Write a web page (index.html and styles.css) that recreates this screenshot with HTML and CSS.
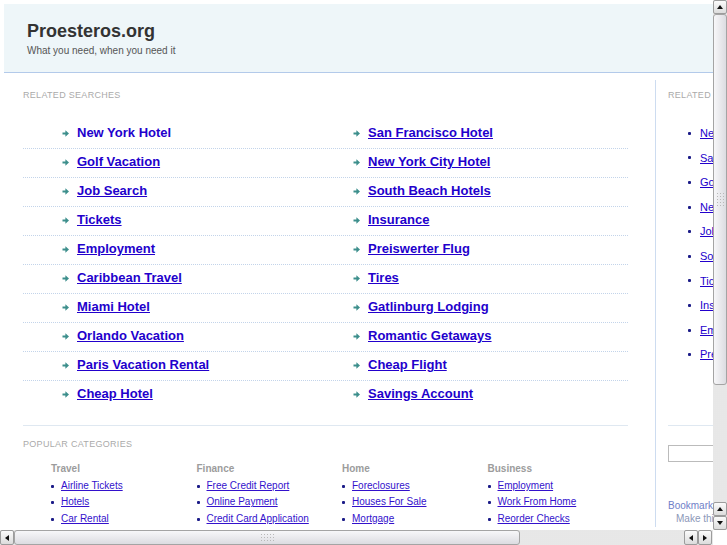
FILE: index.html
```html
<!DOCTYPE html>
<html>
<head>
<meta charset="utf-8">
<title>Proesteros.org</title>
<link rel="stylesheet" href="styles.css">
</head>
<body>
<div class="frame">
  <div class="viewport">
    <div class="page">
      <div class="header">
        <h1 class="title">Proesteros.org</h1>
        <div class="tagline">What you need, when you need it</div>
      </div>
      <div class="content">
        <div class="main">
          <div class="label">Related Searches</div>
          <div class="links">
            <div class="row">
              <div class="item"><svg class="arrow" viewBox="0 0 7 7"><rect x="0.5" y="2.5" width="3.5" height="2"/><path d="M3.4 0.3L7 3.5L3.4 6.7Z"/></svg><a href="#" class="plain">New York Hotel</a></div>
              <div class="item"><svg class="arrow" viewBox="0 0 7 7"><rect x="0.5" y="2.5" width="3.5" height="2"/><path d="M3.4 0.3L7 3.5L3.4 6.7Z"/></svg><a href="#">San Francisco Hotel</a></div>
            </div>
            <div class="row">
              <div class="item"><svg class="arrow" viewBox="0 0 7 7"><rect x="0.5" y="2.5" width="3.5" height="2"/><path d="M3.4 0.3L7 3.5L3.4 6.7Z"/></svg><a href="#">Golf Vacation</a></div>
              <div class="item"><svg class="arrow" viewBox="0 0 7 7"><rect x="0.5" y="2.5" width="3.5" height="2"/><path d="M3.4 0.3L7 3.5L3.4 6.7Z"/></svg><a href="#">New York City Hotel</a></div>
            </div>
            <div class="row">
              <div class="item"><svg class="arrow" viewBox="0 0 7 7"><rect x="0.5" y="2.5" width="3.5" height="2"/><path d="M3.4 0.3L7 3.5L3.4 6.7Z"/></svg><a href="#">Job Search</a></div>
              <div class="item"><svg class="arrow" viewBox="0 0 7 7"><rect x="0.5" y="2.5" width="3.5" height="2"/><path d="M3.4 0.3L7 3.5L3.4 6.7Z"/></svg><a href="#">South Beach Hotels</a></div>
            </div>
            <div class="row">
              <div class="item"><svg class="arrow" viewBox="0 0 7 7"><rect x="0.5" y="2.5" width="3.5" height="2"/><path d="M3.4 0.3L7 3.5L3.4 6.7Z"/></svg><a href="#">Tickets</a></div>
              <div class="item"><svg class="arrow" viewBox="0 0 7 7"><rect x="0.5" y="2.5" width="3.5" height="2"/><path d="M3.4 0.3L7 3.5L3.4 6.7Z"/></svg><a href="#">Insurance</a></div>
            </div>
            <div class="row">
              <div class="item"><svg class="arrow" viewBox="0 0 7 7"><rect x="0.5" y="2.5" width="3.5" height="2"/><path d="M3.4 0.3L7 3.5L3.4 6.7Z"/></svg><a href="#">Employment</a></div>
              <div class="item"><svg class="arrow" viewBox="0 0 7 7"><rect x="0.5" y="2.5" width="3.5" height="2"/><path d="M3.4 0.3L7 3.5L3.4 6.7Z"/></svg><a href="#">Preiswerter Flug</a></div>
            </div>
            <div class="row">
              <div class="item"><svg class="arrow" viewBox="0 0 7 7"><rect x="0.5" y="2.5" width="3.5" height="2"/><path d="M3.4 0.3L7 3.5L3.4 6.7Z"/></svg><a href="#">Caribbean Travel</a></div>
              <div class="item"><svg class="arrow" viewBox="0 0 7 7"><rect x="0.5" y="2.5" width="3.5" height="2"/><path d="M3.4 0.3L7 3.5L3.4 6.7Z"/></svg><a href="#">Tires</a></div>
            </div>
            <div class="row">
              <div class="item"><svg class="arrow" viewBox="0 0 7 7"><rect x="0.5" y="2.5" width="3.5" height="2"/><path d="M3.4 0.3L7 3.5L3.4 6.7Z"/></svg><a href="#">Miami Hotel</a></div>
              <div class="item"><svg class="arrow" viewBox="0 0 7 7"><rect x="0.5" y="2.5" width="3.5" height="2"/><path d="M3.4 0.3L7 3.5L3.4 6.7Z"/></svg><a href="#">Gatlinburg Lodging</a></div>
            </div>
            <div class="row">
              <div class="item"><svg class="arrow" viewBox="0 0 7 7"><rect x="0.5" y="2.5" width="3.5" height="2"/><path d="M3.4 0.3L7 3.5L3.4 6.7Z"/></svg><a href="#">Orlando Vacation</a></div>
              <div class="item"><svg class="arrow" viewBox="0 0 7 7"><rect x="0.5" y="2.5" width="3.5" height="2"/><path d="M3.4 0.3L7 3.5L3.4 6.7Z"/></svg><a href="#">Romantic Getaways</a></div>
            </div>
            <div class="row">
              <div class="item"><svg class="arrow" viewBox="0 0 7 7"><rect x="0.5" y="2.5" width="3.5" height="2"/><path d="M3.4 0.3L7 3.5L3.4 6.7Z"/></svg><a href="#">Paris Vacation Rental</a></div>
              <div class="item"><svg class="arrow" viewBox="0 0 7 7"><rect x="0.5" y="2.5" width="3.5" height="2"/><path d="M3.4 0.3L7 3.5L3.4 6.7Z"/></svg><a href="#">Cheap Flight</a></div>
            </div>
            <div class="row">
              <div class="item"><svg class="arrow" viewBox="0 0 7 7"><rect x="0.5" y="2.5" width="3.5" height="2"/><path d="M3.4 0.3L7 3.5L3.4 6.7Z"/></svg><a href="#">Cheap Hotel</a></div>
              <div class="item"><svg class="arrow" viewBox="0 0 7 7"><rect x="0.5" y="2.5" width="3.5" height="2"/><path d="M3.4 0.3L7 3.5L3.4 6.7Z"/></svg><a href="#">Savings Account</a></div>
            </div>
          </div>
          <div class="popular">
            <div class="label">Popular Categories</div>
            <div class="cats">
              <div class="cat">
                <h3>Travel</h3>
                <ul>
                  <li><span class="dot"></span><a href="#">Airline Tickets</a></li>
                  <li><span class="dot"></span><a href="#">Hotels</a></li>
                  <li><span class="dot"></span><a href="#">Car Rental</a></li>
                </ul>
              </div>
              <div class="cat">
                <h3>Finance</h3>
                <ul>
                  <li><span class="dot"></span><a href="#">Free Credit Report</a></li>
                  <li><span class="dot"></span><a href="#">Online Payment</a></li>
                  <li><span class="dot"></span><a href="#">Credit Card Application</a></li>
                </ul>
              </div>
              <div class="cat">
                <h3>Home</h3>
                <ul>
                  <li><span class="dot"></span><a href="#">Foreclosures</a></li>
                  <li><span class="dot"></span><a href="#">Houses For Sale</a></li>
                  <li><span class="dot"></span><a href="#">Mortgage</a></li>
                </ul>
              </div>
              <div class="cat">
                <h3>Business</h3>
                <ul>
                  <li><span class="dot"></span><a href="#">Employment</a></li>
                  <li><span class="dot"></span><a href="#">Work From Home</a></li>
                  <li><span class="dot"></span><a href="#">Reorder Checks</a></li>
                </ul>
              </div>
            </div>
          </div>
        </div>
        <div class="side">
          <div class="label">Related Searches</div>
          <ul class="side-list">
            <li><span class="dot"></span><a href="#">New York Hotel</a></li>
            <li><span class="dot"></span><a href="#">San Francisco Hotel</a></li>
            <li><span class="dot"></span><a href="#">Golf Vacation</a></li>
            <li><span class="dot"></span><a href="#">New York City Hotel</a></li>
            <li><span class="dot"></span><a href="#">Job Search</a></li>
            <li><span class="dot"></span><a href="#">South Beach Hotels</a></li>
            <li><span class="dot"></span><a href="#">Tickets</a></li>
            <li><span class="dot"></span><a href="#">Insurance</a></li>
            <li><span class="dot"></span><a href="#">Employment</a></li>
            <li><span class="dot"></span><a href="#">Preiswerter Flug</a></li>
          </ul>
          <div class="side-sep"></div>
          <div class="search"><input type="text" class="search-input"></div>
          <div class="bookmark">Bookmark this page</div>
          <div class="homepage">Make this your homepage</div>
        </div>
      </div>
    </div>
  </div>
  <div class="vscroll">
    <div class="sbtn"><span class="tri up"></span></div>
    <div class="vthumb"><span class="grip vgrip"></span></div>
    <div class="track"></div>
    <div class="sbtn"><span class="tri up"></span></div>
    <div class="sbtn"><span class="tri down"></span></div>
  </div>
  <div class="hscroll">
    <div class="sbtn"><span class="tri left"></span></div>
    <div class="hthumb"><span class="grip hgrip"></span></div>
    <div class="track"></div>
    <div class="sbtn"><span class="tri left"></span></div>
    <div class="sbtn"><span class="tri right"></span></div>
  </div>
  <div class="corner"></div>
</div>
</body>
</html>
```
FILE: styles.css
```css
html, body {
  margin: 0;
  padding: 0;
  overflow: hidden;
  background: #fff;
}
body {
  font-family: "Liberation Sans", Arial, Helvetica, sans-serif;
}
.frame {
  display: grid;
  grid-template-columns: 713px 14px;
  grid-template-rows: 530px 15px;
  width: 727px;
  height: 545px;
}
.viewport {
  overflow: hidden;
  background: #fff;
}
.page {
  width: 980px;
  padding: 4px 0 0 4px;
}
.header {
  box-sizing: border-box;
  height: 69px;
  background: #eef6f9;
  border-bottom: 1px solid #b3caea;
  padding: 17px 0 0 23px;
}
.title {
  margin: 0;
  font-size: 18px;
  line-height: 20px;
  font-weight: bold;
  color: #333;
}
.tagline {
  margin-top: 4px;
  font-size: 10px;
  line-height: 12px;
  color: #555;
}
.content {
  display: flex;
  margin-top: 7px;
}
.main {
  width: 605px;
  margin-left: 19px;
  padding-top: 10px;
}
.label {
  font-size: 9px;
  line-height: 11px;
  color: #aaa;
  letter-spacing: 0.3px;
  text-transform: uppercase;
}
.links {
  margin-top: 19px;
}
.row {
  display: grid;
  grid-template-columns: 291px 1fr;
  padding: 4px 0 6px 39px;
  line-height: 18px;
  border-bottom: 1px dotted #c3d4ea;
}
.row:last-child {
  border-bottom: none;
}
.item {
  display: flex;
  align-items: center;
  gap: 8px;
}
.arrow {
  width: 7px;
  height: 7px;
  fill: #3d8f8c;
  flex: none;
}
.item a {
  font-size: 13px;
  font-weight: bold;
  color: #2200cc;
}
.item a.plain {
  text-decoration: none;
}
.popular {
  margin-top: 16px;
  border-top: 1px solid #dfe8f1;
  padding-top: 13px;
}
.cats {
  display: grid;
  grid-template-columns: repeat(4, 145.5px);
  padding-left: 28px;
  margin-top: 11px;
}
.cat h3 {
  margin: 0;
  font-size: 10px;
  line-height: 16px;
  font-weight: bold;
  color: #9c9c9c;
}
.cat ul, .side-list {
  list-style: none;
  margin: 0;
  padding: 0;
}
.cat ul {
  margin-top: 1px;
}
.cat li {
  display: flex;
  align-items: center;
  line-height: 16.4px;
  font-size: 10px;
}
.dot {
  width: 3px;
  height: 3px;
  border-radius: 1px;
  background: #1c1c88;
  margin-right: 7px;
  flex: none;
}
.cat a {
  color: #3311cc;
}
.side {
  width: 300px;
  margin-left: 27px;
  border-left: 1px solid #cddcf0;
  padding: 10px 0 0 12px;
}
.side-list {
  margin-top: 20px;
}
.side-list li {
  display: flex;
  align-items: center;
  padding-left: 20px;
  line-height: 24.6px;
  font-size: 11px;
}
.side-list .dot {
  margin-right: 9px;
}
.side-list a {
  color: #2200cc;
}
.side-sep {
  margin-top: 58px;
  border-top: 1px solid #dfe8f1;
}
.search {
  margin-top: 19px;
}
.search-input {
  box-sizing: border-box;
  width: 150px;
  height: 17px;
  border: 1px solid #bbb;
  padding: 0;
  margin: 0;
  display: block;
}
.bookmark {
  margin-top: 37px;
  font-size: 10px;
  line-height: 13px;
  color: #7080c8;
}
.homepage {
  margin-left: 8px;
  font-size: 10px;
  line-height: 13px;
  color: #8c98b8;
}
.vscroll {
  grid-column: 2;
  grid-row: 1;
  display: flex;
  flex-direction: column;
  background-color: #f2f2f2;
  background-image: radial-gradient(circle, #dadada 0.6px, transparent 0.8px);
  background-size: 2px 2px;
}
.hscroll {
  grid-column: 1;
  grid-row: 2;
  display: flex;
  padding-right: 1px;
  background-color: #f2f2f2;
  background-image: radial-gradient(circle, #dadada 0.6px, transparent 0.8px);
  background-size: 2px 2px;
}
.corner {
  grid-column: 2;
  grid-row: 2;
  background: #fff;
}
.track {
  flex: 1;
}
.sbtn {
  box-sizing: border-box;
  width: 14px;
  height: 14px;
  flex: none;
  border: 1px solid #9c9c9c;
  border-radius: 2px;
  background: linear-gradient(#fbfbfb, #dcdcdc);
  display: flex;
  align-items: center;
  justify-content: center;
}
.hscroll .sbtn {
  height: 15px;
}
.tri {
  width: 0;
  height: 0;
}
.tri.up {
  border-left: 3px solid transparent;
  border-right: 3px solid transparent;
  border-bottom: 4px solid #111;
}
.tri.down {
  border-left: 3px solid transparent;
  border-right: 3px solid transparent;
  border-top: 4px solid #111;
}
.tri.left {
  border-top: 3px solid transparent;
  border-bottom: 3px solid transparent;
  border-right: 4px solid #111;
}
.tri.right {
  border-top: 3px solid transparent;
  border-bottom: 3px solid transparent;
  border-left: 4px solid #111;
}
.vthumb {
  box-sizing: border-box;
  height: 371px;
  flex: none;
  border: 1px solid #a4a4a4;
  border-radius: 3px;
  background: linear-gradient(to right, #f7f7f9, #dcdce1);
  display: flex;
  align-items: center;
  justify-content: center;
}
.hthumb {
  box-sizing: border-box;
  width: 506px;
  flex: none;
  border: 1px solid #a4a4a4;
  border-radius: 3px;
  background: linear-gradient(#f7f7f9, #dcdce1);
  display: flex;
  align-items: center;
  justify-content: center;
}
.grip {
  display: block;
  background-image: radial-gradient(circle, #b8b8b8 0.7px, transparent 0.9px);
  background-size: 3px 3px;
}
.vgrip {
  width: 9px;
  height: 15px;
}
.hgrip {
  width: 15px;
  height: 9px;
}
```
